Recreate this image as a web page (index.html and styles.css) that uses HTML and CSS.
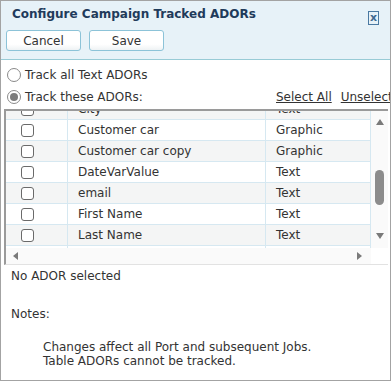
FILE: index.html
```html
<!DOCTYPE html>
<html lang="en">
<head>
    <meta charset="UTF-8">
    <meta name="viewport" content="width=device-width, initial-scale=1.0">
    <title>Configure Campaign Tracked ADORs</title>
    <link rel="stylesheet" href="styles.css">
</head>
<body>
    <div class="dialog">
        <!-- Header with title and actions -->
        <div class="dialog-header">
            <div class="title-row">
                <h1 class="dialog-title">Configure Campaign Tracked ADORs</h1>
                <span class="close-btn">x</span>
            </div>
            <div class="button-row">
                <button class="btn">Cancel</button>
                <button class="btn">Save</button>
            </div>
        </div>

        <!-- Tracking mode -->
        <div class="options">
            <div class="option-row">
                <span class="radio"></span>
                <span class="option-label">Track all Text ADORs</span>
            </div>
            <div class="option-row">
                <div class="option-main">
                    <span class="radio checked"></span>
                    <span class="option-label">Track these ADORs:</span>
                </div>
                <div class="links">
                    <a href="#" class="link">Select All</a>
                    <a href="#" class="link">Unselect All</a>
                </div>
            </div>
        </div>

        <!-- ADOR grid -->
        <div class="grid">
            <div class="grid-main">
                <div class="grid-view">
                    <div class="grid-rows">
                        <div class="grid-row alt">
                            <div class="cell cell-check"><span class="checkbox"></span></div>
                            <div class="cell">City</div>
                            <div class="cell">Text</div>
                        </div>
                        <div class="grid-row">
                            <div class="cell cell-check"><span class="checkbox"></span></div>
                            <div class="cell">Customer car</div>
                            <div class="cell">Graphic</div>
                        </div>
                        <div class="grid-row alt">
                            <div class="cell cell-check"><span class="checkbox"></span></div>
                            <div class="cell">Customer car copy</div>
                            <div class="cell">Graphic</div>
                        </div>
                        <div class="grid-row">
                            <div class="cell cell-check"><span class="checkbox"></span></div>
                            <div class="cell">DateVarValue</div>
                            <div class="cell">Text</div>
                        </div>
                        <div class="grid-row alt">
                            <div class="cell cell-check"><span class="checkbox"></span></div>
                            <div class="cell">email</div>
                            <div class="cell">Text</div>
                        </div>
                        <div class="grid-row">
                            <div class="cell cell-check"><span class="checkbox"></span></div>
                            <div class="cell">First Name</div>
                            <div class="cell">Text</div>
                        </div>
                        <div class="grid-row alt">
                            <div class="cell cell-check"><span class="checkbox"></span></div>
                            <div class="cell">Last Name</div>
                            <div class="cell">Text</div>
                        </div>
                        <div class="grid-row">
                            <div class="cell cell-check"><span class="checkbox"></span></div>
                            <div class="cell">Phone</div>
                            <div class="cell">Text</div>
                        </div>
                    </div>
                </div>
                <div class="vscroll">
                    <span class="arrow arrow-up"></span>
                    <div class="vscroll-track"><span class="thumb"></span></div>
                    <span class="arrow arrow-down"></span>
                </div>
            </div>
            <div class="hscroll">
                <span class="arrow arrow-left"></span>
                <span class="arrow arrow-right"></span>
            </div>
        </div>

        <div class="status">No ADOR selected</div>

        <div class="notes">
            <div class="notes-title">Notes:</div>
            <div class="notes-body">
                Changes affect all Port and subsequent Jobs.<br>
                Table ADORs cannot be tracked.
            </div>
        </div>
    </div>
</body>
</html>
```

FILE: styles.css
```css
/* Dialog shell */
body {
    margin: 0;
    font-family: 'DejaVu Sans', sans-serif;
    font-size: 12px;
    color: #333;
    background: #fff;
}

.dialog {
    width: 391px;
    height: 381px;
    box-sizing: border-box;
    border: 1px solid #a3a3a3;
    overflow: hidden;
}

/* Header */
.dialog-header {
    background-color: #e7f2f8;
    border-bottom: 1px solid #98cbd6;
    height: 59px;
    box-sizing: border-box;
    padding: 6px 11px 0 5px;
}

.title-row {
    display: flex;
    justify-content: space-between;
    align-items: flex-start;
}

.dialog-title {
    margin: 0;
    padding-left: 6px;
    font-size: 12px;
    line-height: 14px;
    font-weight: bold;
    color: #1f3b5b;
}

.close-btn {
    margin-top: 4px;
    width: 11px;
    height: 14px;
    box-sizing: border-box;
    border: 1px solid #4a79a2;
    color: #3f6890;
    font-weight: bold;
    font-size: 11px;
    line-height: 11px;
    text-align: center;
}

.button-row {
    display: flex;
    gap: 8px;
    margin-top: 5px;
}

.btn {
    width: 75px;
    height: 21px;
    padding: 0;
    font-family: inherit;
    font-size: 12px;
    color: #333;
    background: linear-gradient(#ffffff 70%, #eef2f4);
    border: 1px solid #8cc3d8;
    border-radius: 3px;
}

/* Radio options */
.options {
    padding: 4px 0 0 6px;
}

.option-row {
    display: flex;
    align-items: center;
    height: 22px;
    white-space: nowrap;
}

.option-main {
    display: flex;
    align-items: center;
    flex: 0 0 269px;
}

.radio {
    width: 14px;
    height: 14px;
    box-sizing: border-box;
    border: 1px solid #8a8a8a;
    border-radius: 50%;
    margin-right: 4px;
    display: flex;
    align-items: center;
    justify-content: center;
}

.radio.checked::after {
    content: "";
    width: 8px;
    height: 8px;
    border-radius: 50%;
    background: #7b7b7b;
}

.option-label {
    line-height: 22px;
}

.links {
    display: flex;
    gap: 9px;
}

.link {
    color: #333;
    text-decoration: underline;
}

/* Grid */
.grid {
    margin: 1px 2px 0 3px;
    border-top: 2px solid #9a9a9a;
    border-left: 2px solid #9a9a9a;
    border-bottom: 1px solid #e2e2e2;
}

.grid-main {
    display: flex;
}

.grid-view {
    width: 365px;
    height: 137px;
    overflow: hidden;
}

.grid-rows {
    margin-top: -12px;
}

.grid-row {
    display: grid;
    grid-template-columns: 62px 198px 105px;
    height: 21px;
    box-sizing: border-box;
    border-bottom: 1px solid #d6e8f1;
    background: #fff;
}

.grid-row.alt {
    background: #f4f5f5;
}

.cell {
    border-right: 1px solid #d6e8f1;
    padding-left: 10px;
    line-height: 20px;
    white-space: nowrap;
    overflow: hidden;
}

.cell-check {
    padding-left: 15px;
    display: flex;
    align-items: center;
}

.checkbox {
    width: 13px;
    height: 13px;
    box-sizing: border-box;
    border: 1px solid #6a6a6a;
    border-radius: 3px;
    background: #fff;
}

/* Scrollbars */
.vscroll {
    width: 17px;
    height: 137px;
    background: #fafafa;
    display: flex;
    flex-direction: column;
    align-items: center;
    padding: 8px 0 9px;
    box-sizing: border-box;
}

.vscroll-track {
    flex: 1;
    display: flex;
    flex-direction: column;
    align-items: center;
    padding-top: 45px;
}

.thumb {
    width: 9px;
    height: 35px;
    border-radius: 5px;
    background: #8c8c8c;
}

.arrow {
    width: 0;
    height: 0;
    border-style: solid;
    border-color: transparent;
}

.arrow-up {
    border-width: 0 4.5px 6px;
    border-bottom-color: #7a7a7a;
}

.arrow-down {
    border-width: 6px 4.5px 0;
    border-top-color: #7a7a7a;
}

.hscroll {
    width: 365px;
    height: 16px;
    background: #fafafa;
    display: flex;
    align-items: center;
    justify-content: space-between;
    padding: 0 9px 0 7px;
    box-sizing: border-box;
}

.arrow-left {
    border-width: 4.5px 5px 4.5px 0;
    border-right-color: #7a7a7a;
}

.arrow-right {
    border-width: 4.5px 0 4.5px 5px;
    border-left-color: #7a7a7a;
}

/* Footer text */
.status {
    margin-top: 4px;
    padding-left: 10px;
    line-height: 15px;
}

.notes {
    margin-top: 23px;
    padding-left: 10px;
}

.notes-title {
    line-height: 15px;
}

.notes-body {
    margin-top: 18px;
    padding-left: 32px;
    line-height: 14px;
}
```
